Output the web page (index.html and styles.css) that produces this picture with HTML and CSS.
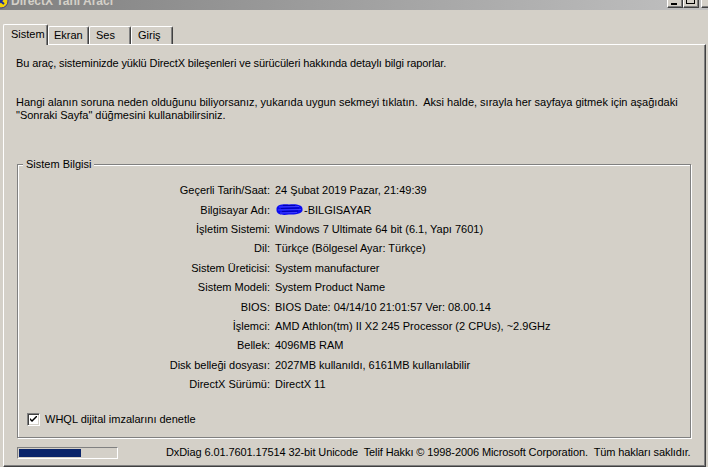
FILE: index.html
```html
<!DOCTYPE html>
<html lang="tr">

<head>
    <meta charset="UTF-8">
    <meta name="viewport" content="width=device-width, initial-scale=1.0">
    <title>DirectX Tanı Aracı</title>
    <link rel="stylesheet" href="styles.css">
</head>

<body>
    <div class="titlebar">
        <div class="titlebar-inner">
            <svg class="app-icon" width="16" height="16" viewBox="0 0 16 16">
                <circle cx="8" cy="8" r="7" fill="#f2d20a" stroke="#3a3a8a" stroke-width="1"/>
                <path d="M4 5 L11 11 M11 5 L5 11" stroke="#1c2f9e" stroke-width="2"/>
            </svg>
            <span class="caption">DirectX Tanı Aracı</span>
            <div class="caption-btns">
                <span class="cbtn"><i class="glyph-min"></i></span>
                <span class="cbtn"><i class="glyph-max"></i></span>
                <span class="cbtn cbtn-close"><i class="glyph-close"></i></span>
            </div>
        </div>
    </div>

    <div class="tabs">
        <div class="tab active">Sistem</div>
        <div class="tab">Ekran</div>
        <div class="tab">Ses</div>
        <div class="tab">Giriş</div>
    </div>

    <div class="panel">
        <p class="intro">Bu araç, sisteminizde yüklü DirectX bileşenleri ve sürücüleri hakkında detaylı bilgi raporlar.</p>
        <p class="hint">Hangi alanın soruna neden olduğunu biliyorsanız, yukarıda uygun sekmeyi tıklatın.  Aksi halde, sırayla her sayfaya gitmek için aşağıdaki<br>"Sonraki Sayfa" düğmesini kullanabilirsiniz.</p>

        <fieldset class="group">
            <legend>Sistem Bilgisi</legend>
            <div class="info">
                <span class="k">Geçerli Tarih/Saat:</span><span class="v">24 Şubat 2019 Pazar, 21:49:39</span>
                <span class="k">Bilgisayar Adı:</span><span class="v"><span class="scribble"><svg width="29" height="13" viewBox="0 0 29 13">
                    <path d="M1.5 6.5 C1 1.5 8 1 14 1.5 C21 0.5 28 2 27.5 6 C28.5 10.5 21 12 14 11.5 C8 12.5 1 12 1.5 6.5 Z" fill="#0b0bf0"/>
                    <path d="M4 4 L24 3.5 M3 7 L26 6.5 M5 10 L22 9.5" stroke="#4040ff" stroke-width="1"/>
                    <path d="M8 2.5 L20 2.5 M6 5.5 L24 5 M7 8.5 L23 8" stroke="#0000b0" stroke-width="1"/>
                </svg></span>-BILGISAYAR</span>
                <span class="k">İşletim Sistemi:</span><span class="v">Windows 7 Ultimate 64 bit (6.1, Yapı 7601)</span>
                <span class="k">Dil:</span><span class="v">Türkçe (Bölgesel Ayar: Türkçe)</span>
                <span class="k">Sistem Üreticisi:</span><span class="v">System manufacturer</span>
                <span class="k">Sistem Modeli:</span><span class="v">System Product Name</span>
                <span class="k">BIOS:</span><span class="v">BIOS Date: 04/14/10 21:01:57 Ver: 08.00.14</span>
                <span class="k">İşlemci:</span><span class="v">AMD Athlon(tm) II X2 245 Processor (2 CPUs), ~2.9GHz</span>
                <span class="k">Bellek:</span><span class="v">4096MB RAM</span>
                <span class="k">Disk belleği dosyası:</span><span class="v">2027MB kullanıldı, 6161MB kullanılabilir</span>
                <span class="k">DirectX Sürümü:</span><span class="v">DirectX 11</span>
            </div>
            <label class="check">
                <span class="box"><svg width="7" height="7" viewBox="0 0 7 7"><path d="M0 2 L0 4 L2 6 L7 1 L7 -1 L2 4 Z" fill="#000"/></svg></span>
                WHQL dijital imzalarını denetle
            </label>
        </fieldset>

        <div class="status">
            <div class="progress"><div class="progress-fill" style="width:62px"></div></div>
            <span class="footer-text">DxDiag 6.01.7601.17514 32-bit Unicode  Telif Hakkı © 1998-2006 Microsoft Corporation.  Tüm hakları saklıdır.</span>
        </div>
    </div>
</body>

</html>
```

FILE: styles.css
```css
* {
    margin: 0;
    padding: 0;
    box-sizing: border-box;
}

body {
    width: 708px;
    height: 467px;
    overflow: hidden;
    background: #d4d0c8;
    color: #000;
    font-family: "Liberation Sans", Arial, sans-serif;
    font-size: 11px;
    line-height: 13px;
}

/* inactive classic caption, only its lower part is on screen */
.titlebar {
    height: 10px;
    overflow: hidden;
    background: linear-gradient(to right, #808080, #c0c0c0);
}

.titlebar-inner {
    display: flex;
    align-items: center;
    height: 18px;
    margin-top: -8px;
}

.app-icon {
    margin-left: -7px;
    flex: none;
}

.caption {
    margin-left: 2px;
    color: #d4d0c8;
    font-weight: bold;
    font-size: 12px;
}

.caption-btns {
    display: flex;
    margin-left: auto;
    margin-right: -9px;
}

.cbtn {
    width: 16px;
    height: 14px;
    background: #d4d0c8;
    border: 1px solid;
    border-color: #fff #404040 #404040 #fff;
    box-shadow: inset -1px -1px 0 #808080;
    position: relative;
}

.cbtn-close {
    margin-left: 2px;
}

.glyph-min {
    position: absolute;
    left: 3px;
    bottom: 2px;
    width: 6px;
    height: 2px;
    background: #000;
}

.glyph-max {
    position: absolute;
    left: 2px;
    top: 1px;
    width: 9px;
    height: 8px;
    border: 1px solid #000;
    border-top-width: 2px;
}

.glyph-close {
    position: absolute;
    left: 3px;
    top: 3px;
    width: 8px;
    height: 2px;
    background: #000;
    transform: rotate(45deg);
}

/* tab strip */
.tabs {
    display: flex;
    align-items: flex-end;
    height: 34px;
    padding-left: 3px;
}

.tab {
    height: 18px;
    line-height: 17px;
    padding-left: 6px;
    border: 1px solid;
    border-bottom: none;
    border-color: #fff #404040 #404040 #fff;
    box-shadow: inset -1px 0 0 #808080;
    border-radius: 2px 2px 0 0;
    background: #d4d0c8;
}

.tab:nth-child(2) {
    width: 41px;
    padding-left: 5px;
}

.tab:nth-child(3),
.tab:nth-child(4) {
    width: 42px;
}

.tab.active {
    width: 45px;
    height: 21px;
    padding-left: 7px;
    line-height: 19px;
    margin-bottom: -1px;
    position: relative;
    z-index: 1;
}

.panel {
    width: 703px;
    height: 423px;
    margin-left: 3px;
    padding: 12px 0 0 12px;
    border: 1px solid;
    border-color: #fff #404040 #404040 #fff;
    box-shadow: inset -1px -1px 0 #808080;
}

.intro {
    letter-spacing: -0.1px;
}

.hint {
    margin-top: 26px;
    white-space: pre-wrap;
}

.group {
    width: 674px;
    height: 280px;
    margin: 36px 0 0 1px;
    border: 1px solid #808080;
    box-shadow: 1px 1px 0 #fff, inset 1px 1px 0 #fff;
    padding: 0;
}

.group legend {
    margin-left: 5px;
    padding: 0 3px;
    background: #d4d0c8;
}

.info {
    display: grid;
    grid-template-columns: 252px 1fr;
    grid-auto-rows: 19.4px;
    column-gap: 5px;
    align-items: center;
    padding-top: 10px;
}

.k {
    text-align: right;
}

.scribble {
    display: inline-block;
    vertical-align: -2px;
    width: 29px;
    height: 13px;
}

.check {
    display: flex;
    align-items: center;
    margin: 19px 0 0 9px;
}

.box {
    width: 13px;
    height: 13px;
    margin-right: 5px;
    background: #fff;
    border: 1px solid;
    border-color: #808080 #fff #fff #808080;
    box-shadow: inset 1px 1px 0 #404040, inset -1px -1px 0 #d4d0c8;
    display: flex;
    align-items: center;
    justify-content: center;
}

.status {
    display: flex;
    align-items: center;
    margin: 8px 0 0 1px;
}

.progress {
    width: 101px;
    height: 12px;
    padding: 1px;
    border: 1px solid;
    border-color: #808080 #fff #fff #808080;
}

.progress-fill {
    height: 100%;
    background: #0a246a;
}

.footer-text {
    margin-left: 48px;
    white-space: pre;
    letter-spacing: -0.1px;
}
```
